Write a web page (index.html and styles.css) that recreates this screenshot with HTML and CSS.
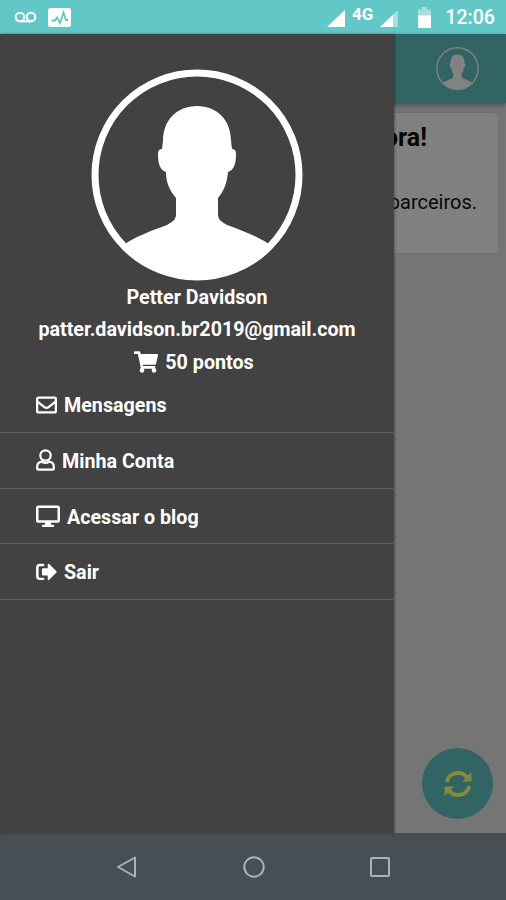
FILE: index.html
```
<!DOCTYPE html>
<html lang="pt-BR">
<head>
  <meta charset="UTF-8" />
  <meta name="viewport" content="width=device-width, initial-scale=1" />
  <title>Menu</title>
  <link rel="stylesheet" href="styles.css">
</head>
<body>
  <svg width="0" height="0" class="defs">
    <symbol id="avatar" viewBox="0 0 212 212">
      <circle cx="106" cy="106" r="102" fill="none" stroke="currentColor" stroke-width="7" />
      <path fill="currentColor" d="M106 37C86 37 72 51 72 72L71 80Q67 80 67 85C67 95 69 101 75 103C75 114 79 122 85 129V145C85 150 83 152 76 156C62 161 46 167 34 175C51 197 76 211 106 211C136 211 161 197 178 175C166 167 150 161 136 156C129 152 127 150 127 145V129C133 122 136 114 137 103C143 101 145 95 145 85Q145 80 141 80L140 72C140 51 126 37 106 37Z" />
    </symbol>
  </svg>

  <header class="status-bar">
    <div class="status-left">
      <svg class="voicemail" width="23" height="12" viewBox="0 0 23 12" fill="none" stroke="currentColor" stroke-width="2">
        <circle cx="6" cy="6" r="4.3" />
        <circle cx="17" cy="6" r="4.3" />
        <path d="M6 10.3H17" />
      </svg>
      <svg width="23" height="19" viewBox="0 0 23 19">
        <rect width="23" height="19" rx="2.5" fill="currentColor" />
        <path class="pulse" d="M3.5 12.5H7L9 9.5L12 15L15.5 4.5L18 12H20" fill="none" stroke-width="1.8" />
      </svg>
    </div>
    <div class="status-right">
      <svg width="18" height="17" viewBox="0 0 18 17"><path fill="currentColor" d="M18 0V17H0Z" /></svg>
      <span class="network">4G</span>
      <svg class="signal" width="18" height="17" viewBox="0 0 18 17">
        <path fill="currentColor" opacity=".45" d="M18 0V17H0Z" />
        <path fill="currentColor" d="M13 4.7V17H0Z" />
      </svg>
      <svg class="battery" width="13" height="21" viewBox="0 0 13 21">
        <path fill="currentColor" opacity=".45" d="M4 0H9V2.5H13V9H0V2.5H4Z" />
        <path fill="currentColor" d="M0 8.5H13V20Q13 21 12 21H1Q0 21 0 20Z" />
      </svg>
      <span class="clock">12:06</span>
    </div>
  </header>

  <main class="app">
    <div class="toolbar">
      <svg class="toolbar-avatar" width="43" height="43"><use href="#avatar" /></svg>
    </div>
    <section class="card">
      <h2>Compre agora!</h2>
      <p>Veja as ofertas dos nossos parceiros.</p>
    </section>
    <button class="refresh" type="button">
      <svg width="28" height="28" viewBox="0 0 28 28">
        <g fill="none" stroke="currentColor" stroke-width="4">
          <path d="M2.6 12C4 6.500 8.500 3 14 3C18 3 21 4.500 23.500 8" />
          <path d="M25.400 16C24 21.500 19.500 25 14 25C10 25 7 23.500 4.500 20" />
        </g>
        <path fill="currentColor" d="M27.500 2V11.500H18ZM.5 26V16.500H10Z" />
      </svg>
    </button>

    <aside class="drawer">
      <div class="profile">
        <svg class="profile-avatar" width="212" height="212"><use href="#avatar" /></svg>
        <div class="name">Petter Davidson</div>
        <div class="email">patter.davidson.br2019@gmail.com</div>
        <div class="points">
          <svg width="24" height="22" viewBox="0 0 576 512"><path fill="currentColor" d="M528.120 301.319l47.273-208C578.806 78.301 567.391 64 551.990 64H159.208l-9.166-44.810C147.758 8.021 137.930 0 126.529 0H24C10.745 0 0 10.745 0 24v16c0 13.255 10.745 24 24 24h69.883l70.248 343.435C147.325 417.100 136 435.222 136 456c0 30.928 25.072 56 56 56s56-25.072 56-56c0-15.674-6.447-29.835-16.824-40h209.647C430.447 426.165 424 440.326 424 456c0 30.928 25.072 56 56 56s56-25.072 56-56c0-22.172-12.888-41.332-31.579-50.405l5.517-24.276c3.413-15.018-8.002-29.319-23.403-29.319H218.117l-6.545-32h293.145c11.206 0 20.920-7.754 23.403-18.681z" /></svg>
          <span>50 pontos</span>
        </div>
      </div>
      <nav class="menu">
        <a class="menu-item">
          <svg width="21" height="18" viewBox="0 0 22 18" fill="none" stroke="currentColor" stroke-width="2.400">
            <rect x="1.200" y="1.200" width="19.600" height="15.600" rx="1.500" />
            <path d="M1.500 5.500L8.800 11.200Q11 12.700 13.200 11.200L20.500 5.500" />
          </svg>
          <span>Mensagens</span>
        </a>
        <a class="menu-item">
          <svg width="19" height="22" viewBox="0 0 19 22" fill="none" stroke="currentColor" stroke-width="2.200">
            <circle cx="9.500" cy="6.500" r="5.200" />
            <path d="M5.800 12.700C2.800 13.200 1.200 15 1.200 17.500V19.500Q1.200 20.700 2.400 20.700H16.600Q17.800 20.700 17.800 19.500V17.500C17.800 15 16.200 13.200 13.200 12.700Q9.500 15.300 5.800 12.700Z" />
          </svg>
          <span>Minha Conta</span>
        </a>
        <a class="menu-item">
          <svg width="24" height="23" viewBox="0 0 25 23">
            <rect x="1.300" y="1.400" width="22.400" height="15.400" rx="1.200" fill="none" stroke="currentColor" stroke-width="2.600" />
            <path fill="currentColor" d="M10 17H15L15.800 20H18Q19 20 19 21.200T18 22.400H7Q6 22.400 6 21.200T7 20H9.200Z" />
          </svg>
          <span>Acessar o blog</span>
        </a>
        <a class="menu-item">
          <svg width="21" height="18" viewBox="0 0 22 18">
            <path fill="none" stroke="currentColor" stroke-width="2.600" stroke-linecap="round" d="M7.500 1.600H4Q1.400 1.600 1.400 4.200V13.500Q1.400 16.200 4 16.200H7.500" />
            <path fill="currentColor" d="M21.400 8.300L13.800 .7Q12.300 -.3 12.300 1.400V5.100H7.200Q6.200 5.100 6.200 6.100V11.700Q6.200 12.700 7.200 12.700H12.300V16.500Q12.300 18.200 13.800 17.200L21.400 9.600Q22 8.950 21.400 8.300Z" />
          </svg>
          <span>Sair</span>
        </a>
      </nav>
    </aside>
  </main>

  <footer class="nav-bar">
    <svg width="22" height="22" viewBox="0 0 22 22"><path d="M19 1.500V20.500L2 11Z" /></svg>
    <svg width="22" height="22" viewBox="0 0 22 22"><circle cx="11" cy="11" r="9.700" /></svg>
    <svg width="22" height="22" viewBox="0 0 22 22"><rect x="2" y="2" width="18" height="18" rx="1" /></svg>
  </footer>
</body>
</html>
```
FILE: styles.css
```
* {
  box-sizing: border-box;
}
body {
  margin: 0;
  height: 100vh;
  display: flex;
  flex-direction: column;
  overflow: hidden;
  font-family: Roboto, sans-serif;
  background: #757575;
}
svg {
  display: block;
  flex-shrink: 0;
}
.defs {
  position: absolute;
}

/* status bar */
.status-bar {
  height: 34px;
  flex-shrink: 0;
  display: flex;
  justify-content: space-between;
  padding: 8px 11px 0 14px;
  background: #62c7c7;
  color: #fff;
}
.status-left,
.status-right {
  display: flex;
  align-items: flex-start;
}
.status-left {
  gap: 11px;
}
.voicemail {
  margin-top: 3px;
}
.pulse {
  stroke: #62c7c7;
}
.status-right > svg {
  margin-top: 2px;
}
.network {
  margin: -3px 7px 0 7px;
  font-size: 17px;
  font-weight: 700;
  line-height: 18px;
}
.status-right > .battery {
  margin: -1px 14px 0 20px;
}
.clock {
  font-size: 19.6px;
  font-weight: 500;
  line-height: 20px;
}

/* dimmed page behind the drawer */
.app {
  flex: 1;
  position: relative;
  display: flex;
  flex-direction: column;
}
.toolbar {
  height: 69px;
  display: flex;
  justify-content: flex-end;
  padding: 13px 27px 0 0;
  background: #316462;
  box-shadow: 0 2px 5px rgba(0, 0, 0, 0.35);
}
.toolbar-avatar {
  color: #828282;
}
.card {
  height: 142px;
  margin: 9px 7px 0 8px;
  padding: 11px 21px 0 16px;
  border: 1px solid #707070;
  border-radius: 5px;
  background: #808080;
  color: #080808;
  text-align: right;
}
.card h2 {
  margin: 0 50px 37px 0;
  font-size: 25px;
  line-height: 28px;
  font-weight: 700;
}
.card p {
  margin: 0;
  font-size: 20px;
  line-height: 26px;
}
.refresh {
  width: 71px;
  height: 71px;
  margin: auto 13px 14px auto;
  display: flex;
  align-items: center;
  justify-content: center;
  padding: 0;
  border: none;
  border-radius: 50%;
  background: #316462;
  color: #88893c;
}

/* drawer */
.drawer {
  position: absolute;
  top: 0;
  left: 0;
  bottom: 0;
  width: 394px;
  padding-top: 35px;
  background: #424242;
  color: #fff;
  font-size: 19.7px;
  font-weight: 700;
  box-shadow: 1px 0 2px rgba(0, 0, 0, 0.3);
}
.profile {
  display: flex;
  flex-direction: column;
  align-items: center;
  line-height: 32.3px;
}
.profile-avatar {
  margin-bottom: 1px;
}
.points {
  display: flex;
  align-items: center;
  gap: 7px;
  margin-right: 6px;
}
.points svg {
  margin-top: -2px;
}
.menu {
  margin-top: -1.500px;
}
.menu-item {
  height: 55.7px;
  display: flex;
  align-items: center;
  gap: 7px;
  padding: 2px 0 0 36px;
  border-bottom: 1px solid #606060;
}
.menu-item svg {
  margin-top: -2px;
}

/* system navigation */
.nav-bar {
  height: 67px;
  flex-shrink: 0;
  display: flex;
  justify-content: space-between;
  align-items: center;
  padding: 0 115px 0 116px;
  background: #474f54;
}
.nav-bar svg {
  fill: none;
  stroke: #aeb2b4;
  stroke-width: 2;
  stroke-linejoin: round;
}
```
